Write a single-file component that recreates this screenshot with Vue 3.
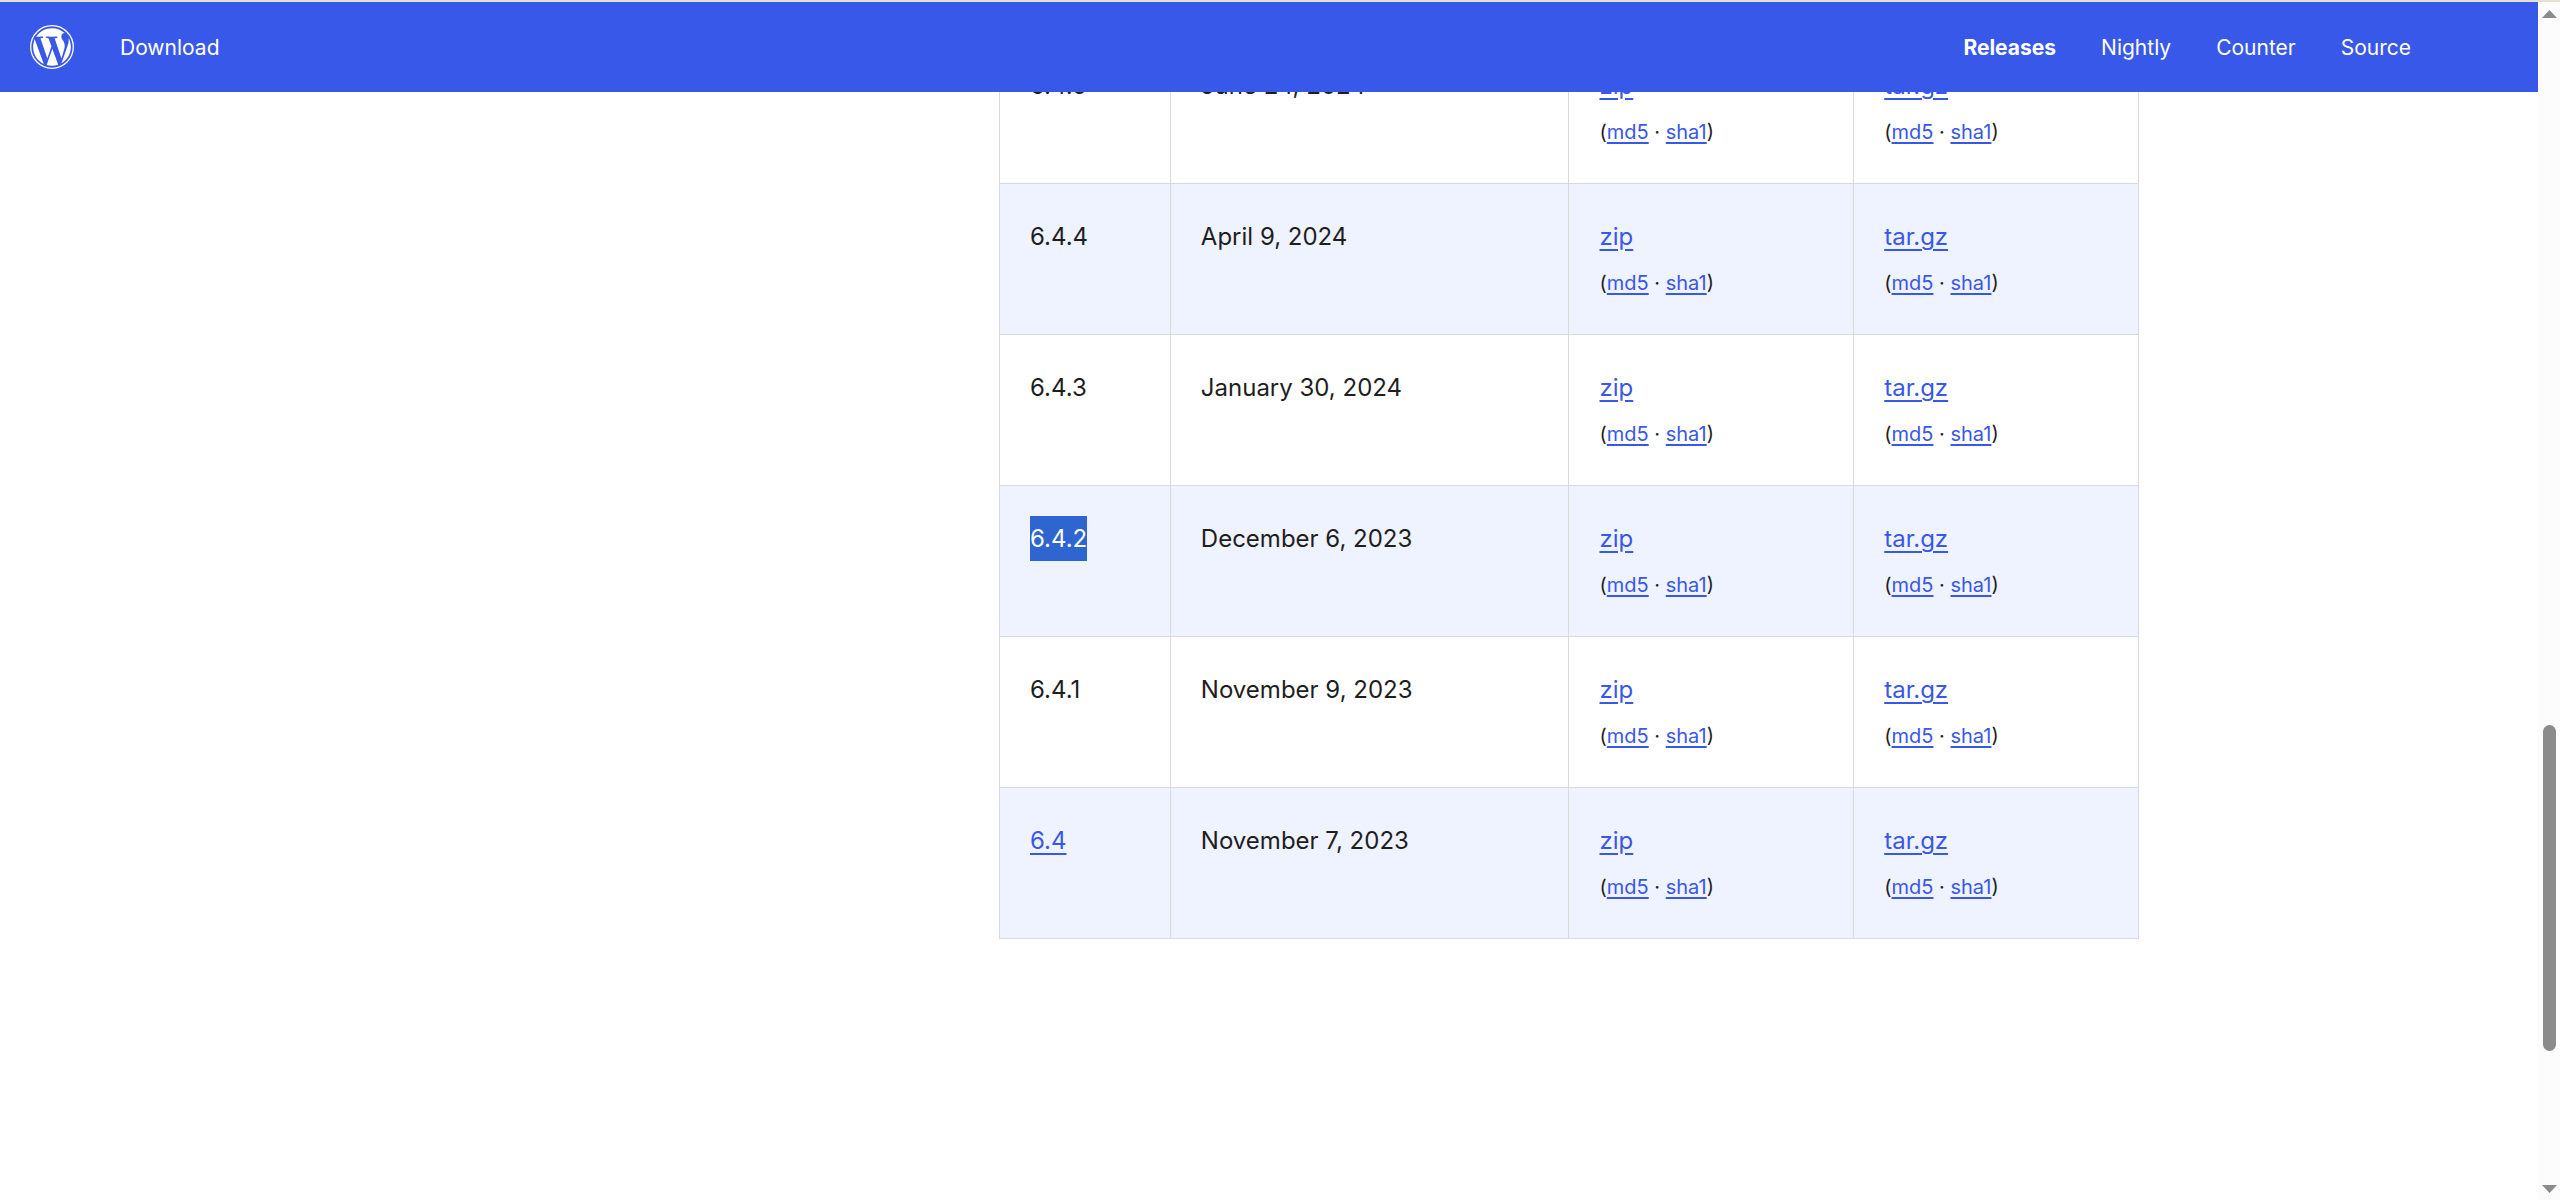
<script setup>
const nav = [
  { label: 'Releases', current: true },
  { label: 'Nightly' },
  { label: 'Counter' },
  { label: 'Source' },
]

const releases = [
  { version: '6.4.5', date: 'June 24, 2024' },
  { version: '6.4.4', date: 'April 9, 2024' },
  { version: '6.4.3', date: 'January 30, 2024' },
  { version: '6.4.2', date: 'December 6, 2023', selected: true },
  { version: '6.4.1', date: 'November 9, 2023' },
  { version: '6.4', date: 'November 7, 2023', link: true },
]

const formats = ['zip', 'tar.gz']
</script>

<template>
  <div class="page">
    <header class="bar">
      <a class="logo" href="#" aria-label="WordPress.org">
        <svg viewBox="0 0 122.52 122.52" aria-hidden="true">
          <path d="m8.708 61.26c0 20.802 12.089 38.779 29.619 47.298l-25.069-68.686c-2.916 6.536-4.55 13.769-4.55 21.388z" />
          <path d="m96.74 58.608c0-6.495-2.333-10.993-4.334-14.494-2.664-4.329-5.161-7.995-5.161-12.324 0-4.831 3.664-9.328 8.825-9.328.233 0 .454.029.681.042-9.35-8.566-21.807-13.796-35.489-13.796-18.36 0-34.513 9.42-43.91 23.688 1.233.037 2.395.063 3.382.063 5.497 0 14.006-.667 14.006-.667 2.833-.167 3.167 3.994.337 4.329 0 0-2.847.335-6.015.501l19.138 56.925 11.501-34.493-8.188-22.434c-2.83-.166-5.511-.501-5.511-.501-2.832-.166-2.5-4.496.332-4.329 0 0 8.679.667 13.843.667 5.496 0 14.006-.667 14.006-.667 2.835-.167 3.168 3.994.337 4.329 0 0-2.853.335-6.015.501l18.992 56.494 5.242-17.517c2.272-7.269 4.001-12.49 4.001-16.989z" />
          <path d="m62.184 65.857-15.768 45.819c4.708 1.384 9.687 2.141 14.846 2.141 6.12 0 11.989-1.058 17.452-2.979-.141-.225-.269-.464-.374-.724z" />
          <path d="m107.376 36.046c.226 1.674.354 3.471.354 5.404 0 5.333-.996 11.328-3.996 18.824l-16.053 46.413c15.624-9.111 26.133-26.038 26.133-45.426.001-9.137-2.333-17.729-6.438-25.215z" />
          <circle class="ring" cx="61.26" cy="61.26" r="59.3" />
        </svg>
      </a>
      <a class="title" href="#">Download</a>
      <nav class="nav" aria-label="Download">
        <a v-for="item in nav" :key="item.label" href="#" :class="{ current: item.current }">{{ item.label }}</a>
      </nav>
    </header>

    <main class="main">
      <div class="container">
        <table class="releases">
          <colgroup>
            <col class="col-version" />
            <col class="col-date" />
            <col class="col-file" />
            <col class="col-file" />
          </colgroup>
          <tbody>
            <tr v-for="r in releases" :key="r.version">
              <td>
                <a v-if="r.link" href="#">{{ r.version }}</a>
                <mark v-else-if="r.selected">{{ r.version }}</mark>
                <template v-else>{{ r.version }}</template>
              </td>
              <td>{{ r.date }}</td>
              <td v-for="f in formats" :key="f">
                <a href="#">{{ f }}</a><br />
                <small>(<a href="#">md5</a> · <a href="#">sha1</a>)</small>
              </td>
            </tr>
          </tbody>
        </table>
      </div>
    </main>

    <div class="scrollbar" aria-hidden="true">
      <svg class="arrow" viewBox="0 0 15 8"><path d="M7.5 0 15 8H0z" /></svg>
      <div class="track">
        <div class="before"></div>
        <div class="thumb"></div>
        <div class="after"></div>
      </div>
      <svg class="arrow" viewBox="0 0 15 8"><path d="M0 0h15L7.5 8z" /></svg>
    </div>
  </div>
</template>

<style>
body {
  background: #fff;
}
</style>

<style scoped>
.page {
  min-height: 100vh;
  box-sizing: border-box;
  padding-right: 22px;
  font-family: Inter, "Liberation Sans", sans-serif;
  font-size: 24px;
  line-height: 45px;
  color: #1e1e1e;
}

.bar {
  position: fixed;
  top: 0;
  left: 0;
  right: 22px;
  z-index: 1;
  display: flex;
  align-items: center;
  height: 90px;
  padding: 0 127px 0 30px;
  border-top: 2px solid #e6e0d0;
  background: #3858e9;
  font-size: 21px;
}

.bar a {
  color: #fff;
  text-decoration: none;
}

.logo svg {
  display: block;
  width: 44px;
  height: 44px;
  fill: #fff;
}

.logo .ring {
  fill: none;
  stroke: #fff;
  stroke-width: 3.6;
}

.title {
  margin-left: 46px;
}

.nav {
  display: flex;
  gap: 45px;
  margin-left: auto;
}

.nav .current {
  font-weight: 700;
}

.main {
  padding: 32px 0 120px;
}

.container {
  display: flex;
  justify-content: flex-end;
  max-width: 1740px;
  margin: 0 auto;
}

.releases {
  width: 1140px;
  table-layout: fixed;
  border-collapse: collapse;
}

.col-version {
  width: 15%;
}

.col-date {
  width: 35%;
}

.col-file {
  width: 25%;
}

.releases td {
  padding: 30px;
  border: 1px solid #d9d9d9;
  vertical-align: top;
}

.releases tr:nth-child(even) {
  background: #eff2ff;
}

.releases a {
  color: #3858e9;
  text-decoration-thickness: 2px;
  text-underline-offset: 4px;
}

.releases small {
  font-size: 20px;
  line-height: 30px;
}

.releases small a {
  text-underline-offset: 3px;
}

.releases mark {
  display: inline-block;
  vertical-align: top;
  background: #2f65d0;
  color: #fff;
}

.scrollbar {
  position: fixed;
  top: 0;
  right: 0;
  bottom: 0;
  display: flex;
  flex-direction: column;
  align-items: center;
  gap: 6px;
  box-sizing: border-box;
  width: 22px;
  padding: 8px 0 7px;
  border-top: 2px solid #e6e0d0;
  background: #fcfcfc;
}

.arrow {
  flex: none;
  width: 15px;
  height: 8px;
  fill: #8b8b8b;
}

.track {
  flex: 1;
  display: flex;
  flex-direction: column;
}

.before {
  flex: 701;
}

.thumb {
  flex: 326;
  width: 13px;
  border-radius: 7px;
  background: #8b8b8b;
}

.after {
  flex: 128;
}
</style>
